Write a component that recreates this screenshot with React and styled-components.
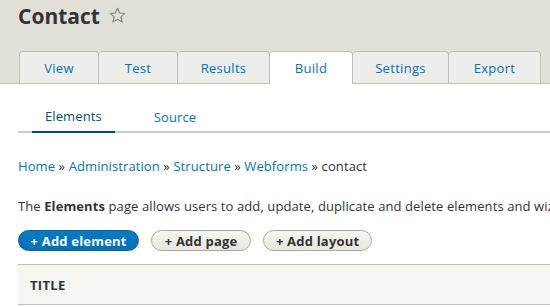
import React from "react";
import styled, { createGlobalStyle } from "styled-components";

const GlobalStyle = createGlobalStyle`
  html, body {
    margin: 0;
    padding: 0;
    background: #fff;
  }
  body {
    font-family: "Open Sans", "DejaVu Sans", sans-serif;
    font-size: 13px;
    letter-spacing: 0.1px;
    color: #333;
    overflow: hidden;
  }
`;

const Header = styled.div`
  background: #e0e0d8;
  padding: 2px 0 0 18px;
  border-bottom: 1px solid #bfbfba;
`;

const TitleRow = styled.h1`
  margin: 0;
  display: flex;
  align-items: center;
  gap: 8px;
  font-size: 21px;
  font-weight: 700;
  letter-spacing: 0;
  color: #333;
  height: 28px;
`;

const Star = styled.svg`
  width: 19px;
  height: 19px;
  margin-top: -1px;
`;

const Tabs = styled.ul`
  list-style: none;
  margin: 21px 0 0 1px;
  padding: 0;
  display: flex;
`;

const Tab = styled.li`
  width: ${(p) => p.w}px;
  box-sizing: border-box;
  display: flex;
  align-items: center;
  justify-content: center;
  background: ${(p) => (p.active ? "#fff" : "#ededea")};
  border: 1px solid #bfbfba;
  border-bottom: none;
  border-left-width: ${(p) => (p.first ? 1 : 0)}px;
  border-radius: 4px 4px 0 0;
  margin-bottom: ${(p) => (p.active ? -1 : 0)}px;
  height: ${(p) => (p.active ? 33 : 32)}px;
  color: #0074bd;
  font-size: 13px;
  letter-spacing: 0.3px;
`;

const SubTabs = styled.div`
  margin: 16px 0 0 18px;
  display: flex;
  border-bottom: 2px solid #ccc;
  height: 31px;
`;

const SubTab = styled.div`
  padding: 0 ${(p) => p.pad}px;
  display: flex;
  align-items: center;
  color: ${(p) => (p.active ? "#004f80" : "#0074bd")};
  border-bottom: ${(p) => (p.active ? "2px solid #004f80" : "none")};
  margin-bottom: -2px;
  margin-left: ${(p) => p.ml || 0}px;
`;

const Content = styled.div`
  padding: 0 0 0 18px;
`;

const Breadcrumb = styled.div`
  margin-top: 24px;
  line-height: 18px;
  white-space: nowrap;
  a {
    color: #0074bd;
    text-decoration: none;
  }
`;

const Description = styled.p`
  margin: 22px 0 0;
  line-height: 18px;
  white-space: nowrap;
`;

const Actions = styled.div`
  display: flex;
  gap: 12px;
  margin-top: 15px;
`;

const Button = styled.div`
  height: 21px;
  box-sizing: border-box;
  padding: 0 ${(p) => p.pad}px;
  display: flex;
  align-items: center;
  border-radius: 11px;
  font-weight: 700;
  font-size: 13px;
  letter-spacing: 0.2px;
  ${(p) =>
    p.primary
      ? `
    background: linear-gradient(#007bc6, #0071b8);
    border: 1px solid #1e5c90;
    color: #fff;
  `
      : `
    background: linear-gradient(#f6f6f3, #e7e7df);
    border: 1px solid #a6a6a6;
    color: #333;
  `}
`;

const Table = styled.div`
  margin-top: 13px;
  background: #f5f5f2;
  border-top: 1px solid #bebfb9;
  border-bottom: 1px solid #bebfb9;
  height: 39px;
  display: flex;
  align-items: center;
  padding-left: 12px;
  font-weight: 700;
  font-size: 13px;
  letter-spacing: 0.3px;
  text-transform: uppercase;
  color: #333;
`;

const tabs = [
  { label: "View", w: 80 },
  { label: "Test", w: 79 },
  { label: "Results", w: 92 },
  { label: "Build", w: 83, active: true },
  { label: "Settings", w: 96 },
  { label: "Export", w: 92 },
];

export default function App() {
  return (
    <>
      <GlobalStyle />
      <Header>
        <TitleRow>
          Contact
          <Star viewBox="0 0 24 24">
            <path
              d="M12 2.8l2.7 6 6.5.6-4.9 4.3 1.5 6.4L12 16.8 6.2 20.1l1.5-6.4-4.9-4.3 6.5-.6z"
              fill="none"
              stroke="#86867f"
              strokeWidth="1.4"
              strokeLinejoin="round"
            />
          </Star>
        </TitleRow>
        <Tabs>
          {tabs.map((t, i) => (
            <Tab key={t.label} w={t.w} active={t.active} first={i === 0}>
              {t.label}
            </Tab>
          ))}
        </Tabs>
      </Header>
      <SubTabs>
        <SubTab active pad={13} ml={14}>
          Elements
        </SubTab>
        <SubTab pad={13} ml={26}>
          Source
        </SubTab>
      </SubTabs>
      <Content>
        <Breadcrumb>
          <a href="#">Home</a> » <a href="#">Administration</a> »{" "}
          <a href="#">Structure</a> » <a href="#">Webforms</a> » contact
        </Breadcrumb>
        <Description>
          The <b>Elements</b> page allows users to add, update, duplicate and
          delete elements and wizard pages.
        </Description>
        <Actions>
          <Button primary pad={11.5}>
            + Add element
          </Button>
          <Button pad={12.5}>+ Add page</Button>
          <Button pad={12}>+ Add layout</Button>
        </Actions>
        <Table>Title</Table>
      </Content>
    </>
  );
}
